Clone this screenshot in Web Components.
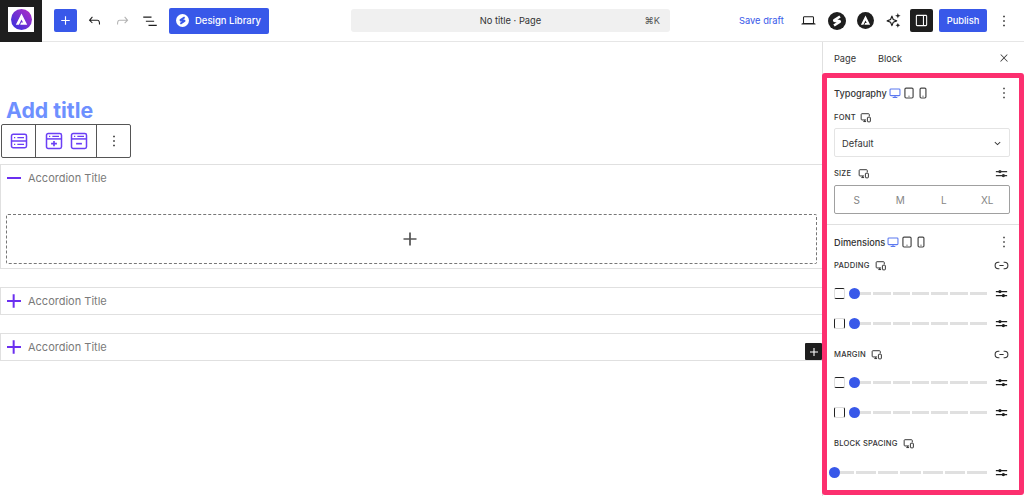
<!DOCTYPE html>
<html lang="en">
<head>
<meta charset="utf-8">
<title>No title - Page</title>
<style>
  html, body { margin: 0; height: 496px; overflow: hidden; background: #fff; }
  body { font-family: Inter, "Liberation Sans", sans-serif; color: #1e1e1e; }
</style>
</head>
<body>
<editor-shell>
  <editor-topbar slot="top"></editor-topbar>

  <editor-canvas slot="canvas">
    <accordion-block open>Accordion Title</accordion-block>
    <accordion-block style="margin-top:18px">Accordion Title</accordion-block>
    <accordion-block style="margin-top:18px" inserter>Accordion Title</accordion-block>
  </editor-canvas>

  <settings-sidebar slot="side">
    <settings-section heading="Typography" style="padding:6px 9px 10px 7px;border-bottom:1px solid #e0e0e0">
      <field-label style="margin-top:6px;--label-gap:3px">FONT</field-label>
      <font-select style="margin-top:2px">Default</font-select>
      <field-label tune style="margin-top:7px;--label-gap:6px">SIZE</field-label>
      <size-picker style="margin-top:3px"></size-picker>
    </settings-section>
    <settings-section heading="Dimensions" style="padding:8px 9px 0 7px">
      <field-label link style="margin-top:5px">PADDING</field-label>
      <range-row side="y" style="margin-top:10px"></range-row>
      <range-row side="x" style="margin-top:12px"></range-row>
      <field-label link style="margin-top:13px">MARGIN</field-label>
      <range-row side="y" style="margin-top:10px"></range-row>
      <range-row side="x" style="margin-top:12px"></range-row>
      <field-label style="margin-top:13px">BLOCK SPACING</field-label>
      <range-row style="margin-top:11px"></range-row>
    </settings-section>
  </settings-sidebar>
</editor-shell>

<script>
const S_MARK = 'M16 6 8.5 10.8Q7.8 12 9.5 12H14.5Q16.2 12 15.5 13.2L8 18';

const ICONS = {
  plus: '<path d="M18 11.2h-5.2V6h-1.6v5.2H6v1.6h5.2V18h1.6v-5.2H18z"/>',
  boldPlus: '<path d="M3.6 10.8h6.8V4h2.4v6.8h7.6v2.4h-7.6V20h-2.4v-6.8H3.6z"/>',
  dash: '<path d="M3.6 10.8h16.8v2.4H3.6z"/>',
  undo: '<path d="M18.3 11.7c-.6-.6-1.4-.9-2.3-.9H6.7l2.9-3.3-1.1-1-4.5 5L8.5 16l1-1-2.7-2.7H16c.5 0 .9.2 1.3.5 1 1 1 3.4 1 4.5v.3h1.5v-.2c0-1.5 0-4.3-1.5-5.7z"/>',
  redo: '<path d="M15.6 6.5l-1.1 1 2.9 3.3H8c-.9 0-1.7.3-2.3.9-1.4 1.5-1.4 4.2-1.4 5.6v.2h1.5v-.3c0-1.1 0-3.5 1-4.5.3-.3.7-.5 1.3-.5h9.2L14.5 15l1.1 1.1 4.6-4.6-4.6-5z"/>',
  list: '<path d="M3 6h11v1.5H3V6Zm3.5 5.5h11V13h-11v-1.5ZM21 17H10v1.5h11V17Z"/>',
  close: '<path d="M13 11.8l6.1-6.3-1-1-6.1 6.2-6.1-6.3-1 1 6.1 6.3-6.5 6.7 1 1 6.5-6.6 6.5 6.7 1-1z"/>',
  kebab: '<path d="M13 19h-2v-2h2v2zm0-6h-2v-2h2v2zm0-6h-2V5h2v2z"/>',
  panel: '<path d="M18 4H6c-1.1 0-2 .9-2 2v12c0 1.1.9 2 2 2h12c1.1 0 2-.9 2-2V6c0-1.1-.9-2-2-2zm-4 14.5H6c-.3 0-.5-.2-.5-.5V6c0-.3.2-.5.5-.5h8v13zm4.500-.5c0 .3-.2.5-.5.5h-2.500v-13H18c.3 0 .5.2.5.5v12z"/>',
  laptop: '<path d="M20.5 16h-.7V8c0-1.1-.9-2-2-2H6.2c-1.1 0-2 .9-2 2v8h-.7c-.8 0-1.5.7-1.5 1.5h20c0-.8-.7-1.5-1.5-1.5zM5.7 8c0-.3.2-.5.5-.5h11.6c.3 0 .5.2.5.5v7.6H5.7V8z"/>',
  sparkle: '<path d="M10 6.5l1.7 4.3 4.3 1.7-4.3 1.7L10 18.5l-1.7-4.3L4 12.5l4.3-1.7z" fill="none" stroke="currentColor" stroke-width="1.5" stroke-linejoin="round"/><path d="M17.5 2.5l.9 2.6 2.6.9-2.6.9-.9 2.6-.9-2.6-2.6-.9 2.6-.9zM17.5 15l.9 2.1 2.1.9-2.1.9-.9 2.1-.9-2.1-2.1-.9 2.1-.9z"/>',
  sliders: '<path d="M3 7.9h18v1.9H3zM3 14.3h18v1.9H3z"/><circle cx="9.5" cy="8.8" r="2.6"/><circle cx="15" cy="15.3" r="2.6"/>',
  link: '<path d="M9 7.5H7.5a4.500 4.500 0 0 0 0 9H9M15 7.5h1.5a4.500 4.500 0 0 1 0 9H15M9 12h6" fill="none" stroke="currentColor" stroke-width="1.5"/>',
  chevron: '<path d="M17.5 10l-5.5 5-5.500-5 1-1.100 4.500 4.100 4.500-4.100z"/>',
  desktop: '<rect x="3.5" y="5" width="17" height="11.5" rx="1.5" fill="none" stroke="currentColor" stroke-width="1.8"/><path d="M12 16.500v3M8 19.800h8" stroke="currentColor" stroke-width="1.8" fill="none"/>',
  tablet: '<rect x="5" y="3.5" width="14" height="17" rx="2" fill="none" stroke="currentColor" stroke-width="2"/><path d="M11 17.500h2" stroke="currentColor" stroke-width="1.5"/>',
  phone: '<rect x="7" y="3.5" width="10" height="17" rx="2" fill="none" stroke="currentColor" stroke-width="2"/><path d="M11 17.500h2" stroke="currentColor" stroke-width="1.5"/>',
  responsive: '<path d="M13 16.500H5.500A1.500 1.500 0 0 1 4 15V6.500A1.500 1.500 0 0 1 5.500 5h12A1.500 1.500 0 0 1 19 6.500V10M8 19.500h5M10.500 16.500v3" fill="none" stroke="currentColor" stroke-width="1.8"/><rect x="15.5" y="11.5" width="5.5" height="8.5" rx="1" fill="none" stroke="currentColor" stroke-width="1.8"/>',
  blockAll: '<rect x="3" y="4" width="18" height="16" rx="2" fill="none" stroke="currentColor" stroke-width="1.8"/><path d="M3.500 12h17" stroke="currentColor" stroke-width="1.8"/><path d="M6 8h1.500M10 8h8M6 16h1.500M10 16h8" stroke="currentColor" stroke-width="1.5"/>',
  blockAdd: '<rect x="3" y="3" width="18" height="18" rx="2" fill="none" stroke="currentColor" stroke-width="1.8"/><path d="M3.500 9.500h17" stroke="currentColor" stroke-width="1.8"/><path d="M6 6.300h1.500M10 6.300h8" stroke="currentColor" stroke-width="1.5"/><path d="M8.500 15.200h7M12 12v6.400" stroke="currentColor" stroke-width="2"/>',
  blockMinus: '<rect x="3" y="3" width="18" height="18" rx="2" fill="none" stroke="currentColor" stroke-width="1.8"/><path d="M3.500 9.500h17" stroke="currentColor" stroke-width="1.8"/><path d="M6 6.300h1.500M10 6.300h8" stroke="currentColor" stroke-width="1.5"/><path d="M8.500 15.200h7" stroke="currentColor" stroke-width="2"/>',
  stackable: `<circle cx="12" cy="12" r="12"/><path d="${S_MARK}" fill="none" stroke="#fff" stroke-width="3.5"/>`,
  astra: '<circle cx="12" cy="12" r="12"/><path d="M12 5 5.500 18h3.600L12 12l1.700 3.500h-2.200l-1 2.500h8z" fill="#fff"/>'
};

class UiIcon extends HTMLElement {
  constructor() {
    super();
    this.attachShadow({ mode: "open" });
  }
  connectedCallback() {
    const size = this.getAttribute('size') || 24;
    this.shadowRoot.innerHTML = `
      <style>
        :host { display: inline-flex; flex: none; width: ${size}px; height: ${size}px; }
        svg { width: 100%; height: 100%; display: block; fill: currentColor; }
      </style>
      <svg viewBox="0 0 24 24">${ICONS[this.getAttribute('name')]}</svg>`;
  }
}
customElements.define('ui-icon', UiIcon);

class EditorShell extends HTMLElement {
  constructor() {
    super();
    this.attachShadow({ mode: "open" });
    this.shadowRoot.innerHTML = `
      <style>
        :host { display: flex; flex-direction: column; width: 1024px; height: 496px; overflow: hidden; }
        .main { display: flex; flex: 1; min-height: 0; }
        ::slotted([slot=canvas]) { flex: 1; min-width: 0; }
        ::slotted([slot=side]) { flex: none; width: 202px; }
      </style>
      <slot name="top"></slot>
      <div class="main">
        <slot name="canvas"></slot>
        <slot name="side"></slot>
      </div>`;
  }
}
customElements.define('editor-shell', EditorShell);

class EditorTopbar extends HTMLElement {
  constructor() {
    super();
    this.attachShadow({ mode: "open" });
    this.shadowRoot.innerHTML = `
      <style>
        :host { display: flex; align-items: center; height: 41px; border-bottom: 1px solid #e6e6e6; font-size: 9.3px; flex: none; }
        .logo { width: 42px; height: 42px; margin-bottom: -1px; background: #1e1e1e; display: flex; align-items: center; justify-content: center; flex: none; }
        .logo span { width: 26px; height: 25px; background: #fff; display: flex; align-items: center; justify-content: center; margin-bottom: 3px; }
        .logo svg { width: 21px; height: 21px; display: block; }
        .add { margin-left: 12px; width: 23px; height: 23px; background: #3858e9; color: #fff; border-radius: 2px; display: flex; align-items: center; justify-content: center; }
        .tool { width: 28px; display: flex; justify-content: center; }
        .undo { margin-left: 3px; }
        .redo { color: #b3b3b3; }
        .library { margin-left: 5px; width: 100px; height: 26px; box-sizing: border-box; padding-left: 7px; gap: 6px; background: #3858e9; color: #fff; border-radius: 2px; display: flex; align-items: center; font-weight: 500; font-size: 9.5px; white-space: nowrap; }
        .library svg { width: 13px; height: 13px; }
        .command { margin-left: 82px; width: 319px; height: 23px; background: #f0f0f0; border-radius: 3px; display: flex; align-items: center; justify-content: center; position: relative; color: #333; }
        .command b { position: absolute; right: 10px; font-weight: 400; color: #555; }
        .save { margin-left: 69px; color: #3858e9; width: 46px; white-space: nowrap; }
        .laptop { margin-left: 12px; width: 22px; justify-content: center; display: flex; }
        .spark { margin-left: 10px; }
        .panel { margin-left: 7px; width: 23px; height: 23px; background: #1e1e1e; color: #fff; border-radius: 2px; display: flex; align-items: center; justify-content: center; }
        .publish { margin-left: 6px; width: 48px; height: 23px; background: #3858e9; color: #fff; border-radius: 2px; display: flex; align-items: center; justify-content: center; font-weight: 500; }
        .more { margin-left: 8px; }
      </style>
      <div class="logo"><span>
        <svg viewBox="0 0 24 24">
          <defs><linearGradient id="astra" x1="0" y1="1" x2="1" y2="0"><stop offset="0" stop-color="#2f2fe0"/><stop offset="1" stop-color="#b72fc4"/></linearGradient></defs>
          <circle cx="12" cy="12" r="12" fill="url(#astra)"/>
          <path d="M12 5 5.500 18h3.600L12 12l1.700 3.500h-2.200l-1 2.500h8z" fill="#fff"/>
        </svg>
      </span></div>
      <div class="add"><ui-icon name="plus" size="17"></ui-icon></div>
      <div class="tool undo"><ui-icon name="undo" size="17"></ui-icon></div>
      <div class="tool redo"><ui-icon name="redo" size="17"></ui-icon></div>
      <div class="tool"><ui-icon name="list" size="18"></ui-icon></div>
      <div class="library">
        <svg viewBox="0 0 24 24"><circle cx="12" cy="12" r="12" fill="#fff"/><path d="${S_MARK}" fill="none" stroke="#3858e9" stroke-width="3.5"/></svg>
        Design Library
      </div>
      <div class="command">No title · Page<b>⌘K</b></div>
      <div class="save">Save draft</div>
      <div class="laptop"><ui-icon name="laptop" size="17"></ui-icon></div>
      <ui-icon name="stackable" size="18" style="margin-left:9px"></ui-icon>
      <ui-icon name="astra" size="17" style="margin-left:11px"></ui-icon>
      <ui-icon class="spark" name="sparkle" size="19"></ui-icon>
      <div class="panel"><ui-icon name="panel" size="17"></ui-icon></div>
      <div class="publish">Publish</div>
      <ui-icon class="more" name="kebab" size="18"></ui-icon>`;
  }
}
customElements.define('editor-topbar', EditorTopbar);

class EditorCanvas extends HTMLElement {
  constructor() {
    super();
    this.attachShadow({ mode: "open" });
    this.shadowRoot.innerHTML = `
      <style>
        :host { display: block; }
        h1 { margin: 55px 0 0 6px; height: 27px; font-size: 21.3px; line-height: 27px; font-weight: 700; color: #6e90ff; }
        .toolbar { margin-left: 1px; width: 130px; height: 34px; box-sizing: border-box; border: 1px solid #555; border-radius: 2px; display: flex; background: #fff; margin-bottom: 6px; }
        .group { box-sizing: border-box; display: flex; align-items: center; justify-content: center; gap: 5px; border-right: 1px solid #555; color: #6b3ff5; }
        .group:last-child { border-right: 0; }
      </style>
      <h1>Add title</h1>
      <div class="toolbar">
        <div class="group" style="width:34px"><ui-icon name="blockAll" size="20"></ui-icon></div>
        <div class="group" style="width:61px"><ui-icon name="blockAdd" size="20"></ui-icon><ui-icon name="blockMinus" size="20"></ui-icon></div>
        <div class="group" style="flex:1;color:#1e1e1e"><ui-icon name="kebab" size="18"></ui-icon></div>
      </div>
      <slot></slot>`;
  }
}
customElements.define('editor-canvas', EditorCanvas);

class AccordionBlock extends HTMLElement {
  constructor() {
    super();
    this.attachShadow({ mode: "open" });
  }
  connectedCallback() {
    const open = this.hasAttribute('open');
    this.shadowRoot.innerHTML = `
      <style>
        :host { display: block; position: relative; border: 1px solid #e0e0e0; border-right: 0; box-sizing: border-box; }
        .head { display: flex; align-items: center; height: 26px; padding-left: 3px; gap: 4px; color: #7a7a7a; font-size: 11px; }
        .head ui-icon { color: #6b2ff0; }
        .drop { margin: 23px 5px 4px 5px; height: 50px; box-sizing: border-box; border: 1px dashed #777; border-radius: 2px; display: flex; align-items: center; justify-content: center; color: #555; }
        .drop ui-icon { margin-right: 3px; }
        .inserter { position: absolute; right: 0; bottom: 0; width: 17px; height: 17px; background: #1e1e1e; color: #fff; display: flex; align-items: center; justify-content: center; border-radius: 1px; }
      </style>
      <div class="head">
        <ui-icon name="${open ? 'dash' : 'boldPlus'}" size="20"></ui-icon>
        <span><slot></slot></span>
      </div>
      ${open ? '<div class="drop"><ui-icon name="plus" size="26"></ui-icon></div>' : ''}
      ${this.hasAttribute('inserter') ? '<div class="inserter"><ui-icon name="plus" size="16"></ui-icon></div>' : ''}`;
  }
}
customElements.define('accordion-block', AccordionBlock);

class SettingsSidebar extends HTMLElement {
  constructor() {
    super();
    this.attachShadow({ mode: "open" });
    this.shadowRoot.innerHTML = `
      <style>
        :host { display: flex; flex-direction: column; border-left: 1px solid #e0e0e0; box-sizing: border-box; }
        .tabs { display: flex; align-items: center; box-sizing: border-box; height: 31px; flex: none; padding: 1px 0 0 11px; gap: 22px; font-size: 9.2px; color: #333; }
        .tabs ui-icon { margin-left: auto; margin-right: 14px; }
        .panel { margin-left: -1px; height: 422px; box-sizing: border-box; border: 5px solid #fc2f6f; border-radius: 3px; background: #fff; }
      </style>
      <div class="tabs"><span>Page</span><span>Block</span><ui-icon name="close" size="12"></ui-icon></div>
      <div class="panel"><slot></slot></div>`;
  }
}
customElements.define('settings-sidebar', SettingsSidebar);

class SettingsSection extends HTMLElement {
  constructor() {
    super();
    this.attachShadow({ mode: "open" });
  }
  connectedCallback() {
    this.shadowRoot.innerHTML = `
      <style>
        :host { display: flex; flex-direction: column; }
        .head { display: flex; align-items: center; height: 18px; font-size: 9.2px; font-weight: 500; color: #333; }
        .icons { display: flex; margin-left: 1px; color: #444; }
        .icons ui-icon:first-child { color: #5b78f0; }
        .more { margin-left: auto; margin-right: -3px; }
      </style>
      <div class="head">
        <span>${this.getAttribute('heading')}</span>
        <div class="icons"><ui-icon name="desktop" size="14"></ui-icon><ui-icon name="tablet" size="14"></ui-icon><ui-icon name="phone" size="14"></ui-icon></div>
        <ui-icon class="more" name="kebab" size="18"></ui-icon>
      </div>
      <slot></slot>`;
  }
}
customElements.define('settings-section', SettingsSection);

class FieldLabel extends HTMLElement {
  constructor() {
    super();
    this.attachShadow({ mode: "open" });
  }
  connectedCallback() {
    const tune = this.hasAttribute('tune');
    const link = this.hasAttribute('link');
    this.shadowRoot.innerHTML = `
      <style>
        :host { display: flex; align-items: center; height: 18px; gap: var(--label-gap, 4px); font-size: 7.6px; font-weight: 500; letter-spacing: .2px; color: #333; }
        .end { margin-left: auto; }
        .end.tune { margin-right: 1px; }
      </style>
      <span><slot></slot></span>
      <ui-icon name="responsive" size="13"></ui-icon>
      ${tune ? '<ui-icon class="end tune" name="sliders" size="15"></ui-icon>' : ''}
      ${link ? '<ui-icon class="end" name="link" size="17"></ui-icon>' : ''}`;
  }
}
customElements.define('field-label', FieldLabel);

class FontSelect extends HTMLElement {
  constructor() {
    super();
    this.attachShadow({ mode: "open" });
    this.shadowRoot.innerHTML = `
      <style>
        :host { display: flex; align-items: center; height: 29px; box-sizing: border-box; border: 1px solid #e4e4e4; border-radius: 2px; padding: 1px 5px 0 7px; font-size: 9.3px; color: #333; }
        ui-icon { margin-left: auto; }
      </style>
      <span><slot></slot></span>
      <ui-icon name="chevron" size="13"></ui-icon>`;
  }
}
customElements.define('font-select', FontSelect);

class SizePicker extends HTMLElement {
  constructor() {
    super();
    this.attachShadow({ mode: "open" });
    this.shadowRoot.innerHTML = `
      <style>
        :host { display: grid; grid-template-columns: repeat(4, 1fr); align-items: center; height: 29px; box-sizing: border-box; border: 1px solid #a0a0a0; border-radius: 2px; font-size: 10px; color: #858585; text-align: center; }
      </style>
      <span>S</span><span>M</span><span>L</span><span>XL</span>`;
  }
}
customElements.define('size-picker', SizePicker);

class RangeRow extends HTMLElement {
  constructor() {
    super();
    this.attachShadow({ mode: "open" });
  }
  connectedCallback() {
    const side = this.getAttribute('side');
    const segs = '<i></i>'.repeat(7);
    this.shadowRoot.innerHTML = `
      <style>
        :host { display: flex; align-items: center; height: 18px; }
        .box { width: 11px; height: 11px; box-sizing: border-box; border: 1px solid #ddd; border-radius: 2px; margin-right: 9px; flex: none; }
        .box.y { border-top: 1.5px solid #222; border-bottom: 1.5px solid #222; }
        .box.x { border-left: 1.5px solid #222; border-right: 1.5px solid #222; }
        .track { position: relative; display: flex; gap: 2px; height: 3px; width: 133px; flex: none; }
        .track.wide { width: 153px; }
        i { flex: 1; background: #e0e0e0; }
        .knob { position: absolute; left: -5px; top: -4px; width: 11px; height: 11px; border-radius: 50%; background: #3858e9; }
        ui-icon { margin-left: auto; margin-right: 1px; }
      </style>
      ${side ? `<div class="box ${side}"></div>` : ''}
      <div class="track ${side ? '' : 'wide'}">${segs}<div class="knob"></div></div>
      <ui-icon name="sliders" size="15"></ui-icon>`;
  }
}
customElements.define('range-row', RangeRow);
</script>
</body>
</html>
